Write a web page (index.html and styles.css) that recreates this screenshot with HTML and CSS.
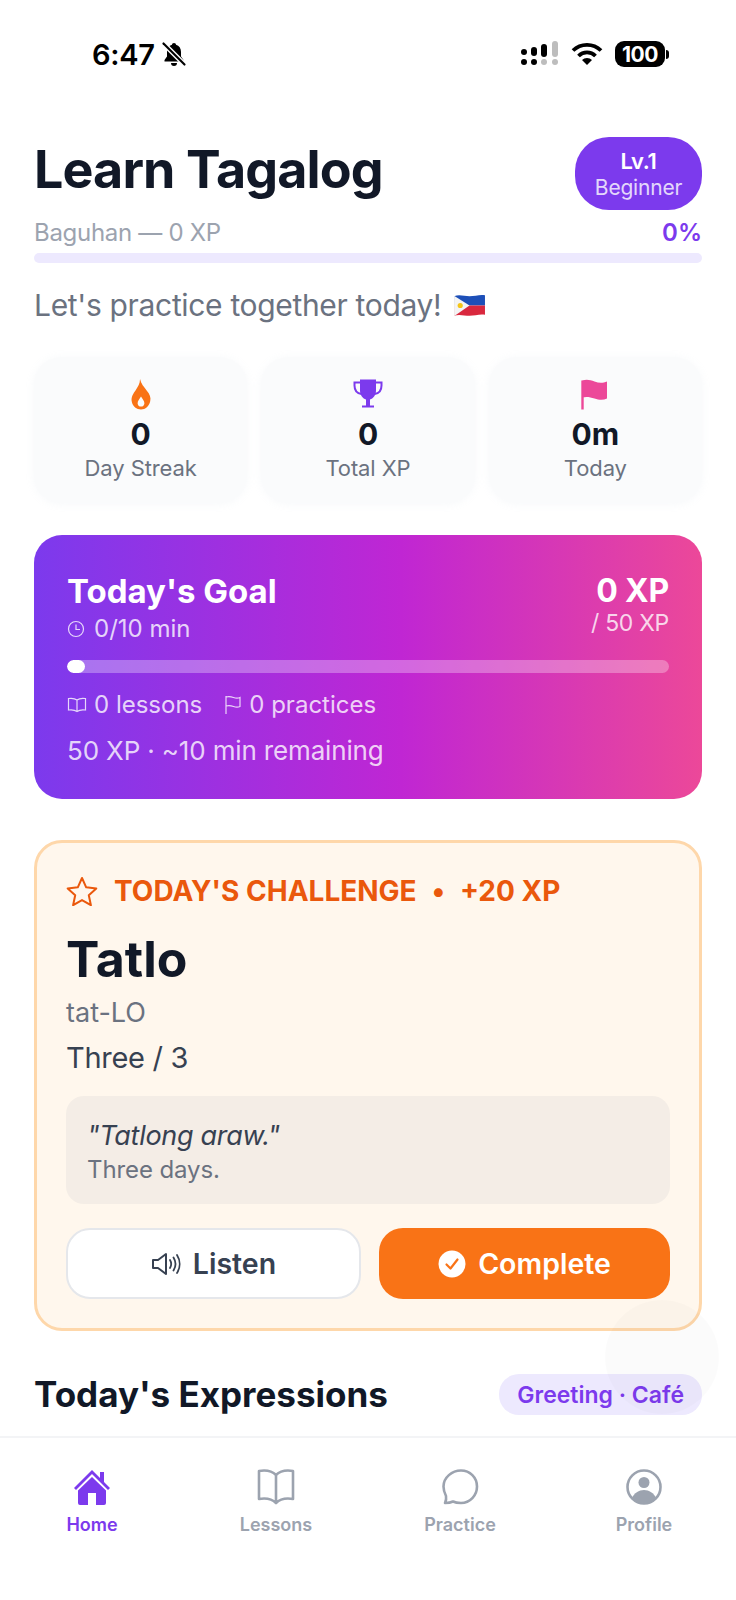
FILE: index.html
```html
<!DOCTYPE html>
<html lang="en">
<head>
  <meta charset="UTF-8" />
  <meta name="viewport" content="width=device-width, initial-scale=1.0" />
  <title>Learn Tagalog</title>
  <link rel="stylesheet" href="styles.css">
</head>
<body>
  <div class="app">

    <!-- Status bar -->
    <div class="status-bar">
      <div class="status-left">
        <span class="status-time">6:47</span>
        <svg class="bell" viewBox="0 0 26 26" width="26" height="26">
          <path d="M13 2c-1.200 0-2 .8-2 1.800C7.800 4.700 6 7.300 6 11v4.500L3.500 19v1.500h19V19L20 15.500V11c0-3.700-1.800-6.300-5-7.200C15 2.800 14.200 2 13 2zM10 22a3 3 0 0 0 6 0z" fill="#000"/>
          <path d="M2 2l22 22" stroke="#fff" stroke-width="5"/>
          <path d="M2.500 2.500l21 21" stroke="#000" stroke-width="2.200" stroke-linecap="round"/>
        </svg>
      </div>
      <div class="status-right">
        <svg viewBox="0 0 42 26" width="42" height="26">
          <g fill="#000">
            <circle cx="4" cy="11" r="3"/><circle cx="4" cy="21" r="3"/>
            <rect x="11" y="6" width="6" height="9" rx="3"/><circle cx="14" cy="21" r="3"/>
            <rect x="21" y="3" width="6" height="13" rx="3"/>
          </g>
          <g fill="#bdbdbd">
            <circle cx="24" cy="21" r="3"/>
            <rect x="32" y="0" width="6" height="16" rx="3"/><circle cx="35" cy="21" r="3"/>
          </g>
        </svg>
        <svg viewBox="0 0 32 24" width="32" height="24">
          <path d="M2 8.500a20 20 0 0 1 28 0" fill="none" stroke="#000" stroke-width="3.800"/>
          <path d="M7.500 14a12 12 0 0 1 17 0" fill="none" stroke="#000" stroke-width="3.800"/>
          <path d="M16 23l-5-5a7 7 0 0 1 10 0z" fill="#000"/>
        </svg>
        <div class="battery"><span class="battery-num">100</span></div>
        <span class="battery-tip"></span>
      </div>
    </div>

    <div class="scroll">
      <!-- Header -->
      <div class="top-row">
        <h1>Learn Tagalog</h1>
        <div class="level-badge">
          <strong>Lv.1</strong>
          <span>Beginner</span>
        </div>
      </div>
      <div class="level-row">
        <span class="level-name">Baguhan — 0 XP</span>
        <span class="level-pct">0%</span>
      </div>
      <div class="level-bar"></div>
      <p class="greeting">
        Let's practice together today!
        <svg class="ph-flag" viewBox="0 0 32 24" width="33" height="25">
          <path d="M1 3c5-2 10 0 15 0s10-2 15-1v10H1z" fill="#1d4fb8"/>
          <path d="M1 12h30v9c-5-1-10 1-15 1s-10-2-15 0z" fill="#d9283e"/>
          <path d="M1 2.500L16 12 1 22.500z" fill="#f4f4f4"/>
          <circle cx="7" cy="12" r="2.500" fill="#f5c518"/>
        </svg>
      </p>

      <!-- Stats -->
      <div class="stats">
        <div class="stat-card">
          <svg viewBox="0 0 24 32" width="24" height="31">
            <path fill-rule="evenodd" d="M11 0c1 5 4 8 7 12 3 3.500 4.500 7 3.500 11-1 5-5 8.500-9.500 8.500S3.500 28.500 2.500 23.500C1.500 18.500 4 15 6.500 11.500 8.500 8.500 11 5 11 0zM12 18c-1.500 2.500-3.500 4.500-3.500 7 0 2 1.500 3.500 3.500 3.500s3.500-1.500 3.500-3.500c0-2.500-2-4.500-3.500-7z" fill="#f97316"/>
          </svg>
          <div class="stat-num">0</div>
          <div class="stat-label">Day Streak</div>
        </div>
        <div class="stat-card">
          <svg viewBox="0 0 30 30" width="30" height="31">
            <path d="M7 0h16v11c0 5-3 8-6 9v6h4v2H9v-2h4v-6c-3-1-6-4-6-9z" fill="#7c3aed"/>
            <path d="M7 3H1.500v3c0 5 3 8 7 8.500M23 3h5.500v3c0 5-3 8-7 8.500" fill="none" stroke="#7c3aed" stroke-width="2"/>
          </svg>
          <div class="stat-num">0</div>
          <div class="stat-label">Total XP</div>
        </div>
        <div class="stat-card">
          <svg viewBox="0 0 28 30" width="28" height="31">
            <path d="M1.500 1v29" stroke="#ec4899" stroke-width="2.400" fill="none"/>
            <path d="M1.500 1c4-1.500 8-.5 12 1s8 2 12.500 0v17c-4 2-8 1.500-12.500 0s-8-2-12.500-1z" fill="#ec4899"/>
          </svg>
          <div class="stat-num">0m</div>
          <div class="stat-label">Today</div>
        </div>
      </div>

      <!-- Daily goal -->
      <div class="goal-card">
        <div class="goal-top">
          <div>
            <div class="goal-title">Today's Goal</div>
            <div class="goal-line goal-time">
              <svg viewBox="0 0 18 18" width="18" height="18" class="goal-icon">
                <circle cx="9" cy="9" r="7.500"/><path d="M9 4.500V9.500h4"/>
              </svg>
              0/10 min
            </div>
          </div>
          <div class="goal-xp">
            <div class="goal-xp-num">0 XP</div>
            <div class="goal-xp-total">/ 50 XP</div>
          </div>
        </div>
        <div class="goal-bar"><div class="goal-fill" style="width: 3%"></div></div>
        <div class="goal-meta">
          <span class="goal-line">
            <svg viewBox="0 0 20 18" width="20" height="18" class="goal-icon">
              <path d="M10 4C8 2.500 5 2 1.500 2.500v11.500C5 13.500 8 14 10 15.500 12 14 15 13.500 18.500 14V2.500C15 2 12 2.500 10 4zM10 4v11.500"/>
            </svg>
            0 lessons
          </span>
          <span class="goal-line">
            <svg viewBox="0 0 18 20" width="18" height="20" class="goal-icon">
              <path d="M2 1v18M2 2c3-1 5-.5 7.500.5s4.500 1 6.500 0v9c-2 1-4 1-6.500 0S5 10 2 11"/>
            </svg>
            0 practices
          </span>
        </div>
        <div class="goal-left">50 XP · ~10 min remaining</div>
      </div>

      <!-- Challenge -->
      <div class="challenge">
        <div class="challenge-head">
          <svg viewBox="0 0 32 30" width="32" height="30">
            <path d="M16 2l4.200 9.300 10.100 1.100-7.500 6.800 2.100 10-8.900-5.100-8.900 5.100 2.100-10-7.500-6.800 10.100-1.100z" fill="none" stroke="#ea580c" stroke-width="2" stroke-linejoin="round"/>
          </svg>
          <span>TODAY'S CHALLENGE</span>
          <span class="head-dot">•</span>
          <span>+20 XP</span>
        </div>
        <div class="word">Tatlo</div>
        <div class="pron">tat-LO</div>
        <div class="meaning">Three / 3</div>
        <div class="example">
          <div class="example-tl">"Tatlong araw."</div>
          <div class="example-en">Three days.</div>
        </div>
        <div class="actions">
          <button class="btn btn-listen">
            <svg viewBox="0 0 30 24" width="30" height="24">
              <path d="M2 8h5l8-6v20l-8-6H2z" fill="none" stroke="#374151" stroke-width="2" stroke-linejoin="round"/>
              <path d="M19 8c1.500 2.500 1.500 5.500 0 8M22.500 5.500c2.500 4 2.500 9 0 13M26 3c3.500 5.500 3.500 12.500 0 18" fill="none" stroke="#374151" stroke-width="1.800" stroke-linecap="round"/>
            </svg>
            Listen
          </button>
          <button class="btn btn-complete">
            <svg viewBox="0 0 28 28" width="28" height="28">
              <circle cx="14" cy="14" r="13.500" fill="#fff"/>
              <path d="M8.500 14.500l4 4 7-9" fill="none" stroke="#f97316" stroke-width="2.200" stroke-linecap="round" stroke-linejoin="round"/>
            </svg>
            Complete
          </button>
        </div>
      </div>

      <!-- Expressions -->
      <div class="section-head">
        <h2>Today's Expressions</h2>
        <span class="topic-pill">Greeting · Café</span>
      </div>
    </div>

    <div class="floating-btn"></div>

    <!-- Bottom nav -->
    <nav class="tabbar">
      <div class="tab tab-active">
        <svg viewBox="0 0 38 36" width="38" height="36">
          <path d="M19 1L1 19l2 2L19 5l16 16 2-2-6-6V3h-4v6z" fill="#7c3aed"/>
          <path d="M19 8L5 21.500V34a2 2 0 0 0 2 2h8V24h8v12h8a2 2 0 0 0 2-2V21.500z" fill="#7c3aed"/>
        </svg>
        <span>Home</span>
      </div>
      <div class="tab">
        <svg viewBox="0 0 38 36" width="38" height="36">
          <path d="M19 6C15 2 8 1 2 2v28c6-1 13 0 17 4 4-4 11-5 17-4V2c-6-1-13 0-17 4zM19 6v28" fill="none" stroke="#9ca3af" stroke-width="2.600" stroke-linejoin="round"/>
        </svg>
        <span>Lessons</span>
      </div>
      <div class="tab">
        <svg viewBox="0 0 38 36" width="38" height="36">
          <path d="M20 1.500c9 0 16 7 16 16s-7 16.500-16 16.500c-3 0-6-.500-8-1.500-2 1-5 1.500-8 1.500 1-2 1.500-4 1-7C3.500 24 2.500 21 2.500 17.500c0-9 8.500-16 17.500-16z" fill="none" stroke="#9ca3af" stroke-width="2.600" stroke-linejoin="round"/>
        </svg>
        <span>Practice</span>
      </div>
      <div class="tab">
        <svg viewBox="0 0 36 36" width="36" height="36">
          <circle cx="18" cy="18" r="16.500" fill="none" stroke="#9ca3af" stroke-width="2.600"/>
          <circle cx="18" cy="13.500" r="5.500" fill="#9ca3af"/>
          <path d="M6 29c2-5 7-8 12-8s10 3 12 8c-3 3-7 5-12 5s-9-2-12-5z" fill="#9ca3af"/>
        </svg>
        <span>Profile</span>
      </div>
    </nav>
  </div>
</body>
</html>
```

FILE: styles.css
```css
:root {
  --texto: #111827;
  --cinza: #6b7280;
  --cinza-claro: #9ca3af;
  --roxo: #7c3aed;
  --laranja: #f97316;
  --laranja-escuro: #ea580c;
}

* {
  box-sizing: border-box;
}

body {
  margin: 0;
  background: #fff;
  color: var(--texto);
  font-family: "Inter", "Liberation Sans", sans-serif;
}

.app {
  position: relative;
  width: 736px;
  height: 1600px;
  overflow: hidden;
  display: flex;
  flex-direction: column;
}

/* Status bar */
.status-bar {
  height: 137px;
  flex-shrink: 0;
  padding: 39px 67px 0 92px;
  display: flex;
  justify-content: space-between;
  align-items: flex-start;
}

.status-left,
.status-right {
  display: flex;
  align-items: center;
  height: 30px;
}

.status-time {
  font-size: 29px;
  font-weight: 600;
  color: #000;
  letter-spacing: -0.3px;
}

.bell {
  margin-left: 6px;
}

.status-right svg:first-child {
  margin-right: 9px;
}

.battery {
  margin-left: 12px;
  width: 50px;
  height: 26px;
  border-radius: 9px;
  background: #000;
  display: flex;
  align-items: center;
  justify-content: center;
}

.battery-num {
  color: #fff;
  font-size: 21px;
  font-weight: 700;
  letter-spacing: -0.5px;
}

.battery-tip {
  width: 3px;
  height: 9px;
  margin-left: 1px;
  background: #000;
  border-radius: 0 3px 3px 0;
}

/* Main */
.scroll {
  flex: 1;
  min-height: 0;
  overflow: hidden;
  padding: 0 34px;
}

.top-row {
  display: flex;
  justify-content: space-between;
  align-items: center;
}

h1 {
  margin: 0 0 8px;
  font-size: 52px;
  font-weight: 700;
  letter-spacing: -0.9px;
  line-height: 62px;
}

.level-badge {
  width: 127px;
  height: 73px;
  border-radius: 34px;
  background: var(--roxo);
  color: #fff;
  display: flex;
  flex-direction: column;
  align-items: center;
  justify-content: center;
}

.level-badge strong {
  font-size: 22px;
  font-weight: 600;
  line-height: 28px;
  letter-spacing: -0.3px;
}

.level-badge span {
  font-size: 21px;
  line-height: 26px;
  letter-spacing: -0.2px;
  opacity: 0.8;
}

.level-row {
  display: flex;
  justify-content: space-between;
  align-items: center;
  height: 28px;
  margin-top: 8px;
  font-size: 24px;
}

.level-name {
  color: var(--cinza-claro);
  letter-spacing: -0.3px;
}

.level-pct {
  color: var(--roxo);
  font-weight: 600;
}

.level-bar {
  height: 10px;
  margin-top: 7px;
  background: #ede9fe;
  border-radius: 5px;
}

.greeting {
  margin: 24px 0 0;
  font-size: 30px;
  line-height: 36px;
  letter-spacing: -0.33px;
  color: var(--cinza);
  display: flex;
  align-items: center;
  gap: 12px;
}

/* Stats */
.stats {
  display: grid;
  grid-template-columns: repeat(3, 1fr);
  gap: 14px;
  margin-top: 34px;
}

.stat-card {
  height: 146px;
  padding-top: 22px;
  background: #fafbfc;
  border-radius: 28px;
  box-shadow: 0 1px 8px rgba(245, 247, 250, 0.9);
  display: flex;
  flex-direction: column;
  align-items: center;
}

.stat-num {
  font-size: 30px;
  font-weight: 700;
  line-height: 36px;
  margin-top: 6px;
}

.stat-label {
  font-size: 22px;
  line-height: 28px;
  letter-spacing: -0.1px;
  margin-top: 2px;
  color: var(--cinza);
}

/* Goal */
.goal-card {
  height: 264px;
  margin-top: 32px;
  padding: 36px 33px 0;
  border-radius: 28px;
  color: #fff;
  background: linear-gradient(90deg, #7c3aed 0%, #c026d3 55%, #ec4899 100%);
}

.goal-top {
  display: flex;
  justify-content: space-between;
}

.goal-title {
  font-size: 33px;
  font-weight: 700;
  line-height: 40px;
}

.goal-line {
  display: flex;
  align-items: center;
  gap: 7px;
  font-size: 24px;
  line-height: 30px;
  color: rgba(255, 255, 255, 0.8);
}

.goal-icon {
  fill: none;
  stroke: rgba(255, 255, 255, 0.8);
  stroke-width: 1.2;
}

.goal-time {
  margin-top: 3px;
  gap: 9px;
}

.goal-xp {
  text-align: right;
}

.goal-xp-num {
  font-size: 32px;
  font-weight: 700;
  line-height: 40px;
  letter-spacing: -0.2px;
}

.goal-xp-total {
  font-size: 23px;
  line-height: 24px;
  letter-spacing: -0.3px;
  color: rgba(255, 255, 255, 0.8);
}

.goal-bar {
  height: 13px;
  margin-top: 16px;
  border-radius: 7px;
  background: rgba(255, 255, 255, 0.3);
  overflow: hidden;
}

.goal-fill {
  height: 100%;
  border-radius: 7px;
  background: #fff;
}

.goal-meta {
  display: flex;
  gap: 22px;
  margin-top: 17px;
}

.goal-left {
  margin-top: 15px;
  font-size: 26px;
  line-height: 32px;
  letter-spacing: -0.15px;
  color: rgba(255, 255, 255, 0.8);
}

/* Challenge */
.challenge {
  height: 491px;
  margin-top: 41px;
  padding: 31px 29px 0;
  background: #fff7ed;
  border: 3px solid #fed7aa;
  border-radius: 28px;
}

.challenge-head {
  display: flex;
  align-items: center;
  gap: 14px;
  font-size: 28px;
  font-weight: 700;
  line-height: 34px;
  color: var(--laranja-escuro);
}

.challenge-head svg {
  margin-right: 2px;
}

.head-dot {
  margin: 0 1px;
}

.word {
  font-size: 50px;
  font-weight: 700;
  line-height: 60px;
  margin-top: 21px;
}

.pron {
  font-size: 27px;
  line-height: 34px;
  margin-top: 7px;
  color: var(--cinza);
}

.meaning {
  font-size: 29px;
  line-height: 36px;
  letter-spacing: -0.3px;
  margin-top: 10px;
  color: #374151;
}

.example {
  height: 108px;
  margin-top: 20px;
  padding: 23px 21px 0;
  background: #f4ede6;
  border-radius: 18px;
}

.example-tl {
  font-size: 27px;
  font-style: italic;
  line-height: 34px;
  letter-spacing: -0.3px;
  color: #374151;
}

.example-en {
  font-size: 24px;
  line-height: 30px;
  letter-spacing: -0.1px;
  margin-top: 2px;
  color: var(--cinza);
}

.actions {
  display: flex;
  gap: 18px;
  margin-top: 24px;
}

.btn {
  flex: 1;
  height: 71px;
  border-radius: 24px;
  font-family: inherit;
  font-size: 28.5px;
  font-weight: 600;
  display: flex;
  align-items: center;
  justify-content: center;
  gap: 12px;
}

.btn-listen {
  background: #fff;
  border: 2px solid #e5e7eb;
  color: #374151;
}

.btn-complete {
  background: var(--laranja);
  border: none;
  color: #fff;
}

/* Expressions */
.section-head {
  display: flex;
  justify-content: space-between;
  align-items: center;
  margin-top: 43px;
}

h2 {
  margin: 0;
  font-size: 35px;
  font-weight: 700;
  line-height: 41px;
}

.topic-pill {
  height: 41px;
  padding: 0 18px;
  border-radius: 20px;
  background: #ede9fe;
  color: var(--roxo);
  font-size: 23px;
  font-weight: 600;
  line-height: 43px;
}

.floating-btn {
  position: absolute;
  left: 605px;
  top: 1300px;
  width: 114px;
  height: 114px;
  border-radius: 50%;
  background: rgba(0, 0, 0, 0.015);
}

/* Bottom nav */
.tabbar {
  height: 164px;
  flex-shrink: 0;
  padding-top: 31px;
  border-top: 2px solid #f3f4f6;
  display: grid;
  grid-template-columns: repeat(4, 1fr);
  background: #fff;
}

.tab {
  display: flex;
  flex-direction: column;
  align-items: center;
  font-size: 18px;
  font-weight: 600;
  color: var(--cinza-claro);
}

.tab span {
  margin-top: 8px;
  line-height: 24px;
}

.tab-active {
  color: var(--roxo);
}
```
